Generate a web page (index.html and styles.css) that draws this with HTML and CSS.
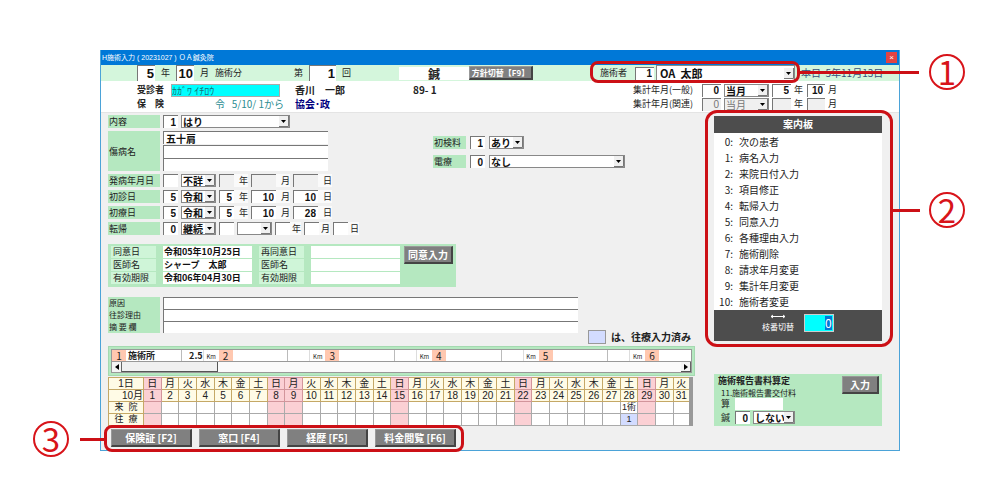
FILE: index.html
```html
<!DOCTYPE html>
<html lang="ja">
<head>
<meta charset="utf-8">
<title>施術入力</title>
<link rel="stylesheet" href="styles.css">
</head>
<body>
<div class="window">
  <header class="titlebar">
    <span>H施術入力 ( 20231027 ) ＯＡ鍼灸院</span>
    <button class="close" aria-label="閉じる">×</button>
  </header>

  <section class="top">
    <div class="band">
      <div class="period">
        <input class="field big" aria-label="施術年" value="5"><span>年</span>
        <input class="field big" aria-label="施術月" value="10"><span>月</span>
        <span>施術分</span>
      </div>
      <label class="times">第 <input class="field big" value="1"> 回</label>
      <strong class="kind">鍼</strong>
      <button class="btn switch">方針切替【F9】</button>
      <div class="practitioner">
        <label for="prac">施術者</label>
        <input class="field" id="prac" value="1">
        <select class="pick large" aria-label="施術者名"><option>OA&nbsp; 太郎</option></select>
        <div class="callout callout-1"><i></i><b>1</b></div>
      </div>
      <span class="today">本日&nbsp; 5年11月13日</span>
    </div>
    <div class="patient">
      <div class="info">
        <label for="kana">受診者</label><input class="kana" id="kana" value="ｶｶﾞﾜ ｲﾁﾛｳ"><strong>香川　一郎</strong><b>89- 1</b>
        <strong>保　険</strong><span class="since">令&nbsp;&nbsp; 5/10/ 1から</span><strong class="navy">協会･政</strong>
      </div>
      <div class="totals">
        <label for="t1">集計年月(一般)</label><input class="field" id="t1" value="0">
        <select class="pick" aria-label="一般の月"><option>当月</option></select>
        <input class="field" aria-label="一般の年" value="5"><span>年</span>
        <input class="field" aria-label="一般の集計月" value="10"><span>月</span>
        <label for="t2">集計年月(関連)</label><input class="field off" id="t2" value="0">
        <select class="pick off" aria-label="関連の月"><option>当月</option></select>
        <input class="field off" aria-label="関連の年"><span>年</span>
        <input class="field off" aria-label="関連の集計月"><span>月</span>
      </div>
    </div>
  </section>

  <main class="body">
    <div class="left">
      <div class="forms">
        <div class="form">
          <div class="row"><label class="tag" for="naiyo">内容</label><input class="field w15" id="naiyo" value="1"><select class="pick w108" aria-label="内容の種類"><option>はり</option></select></div>
          <div class="row disease"><label class="tag" for="dis">傷病名</label><div class="lines"><input class="field text" id="dis" value="五十肩"><input class="field" aria-label="傷病名2"><input class="field" aria-label="傷病名3"></div></div>
          <div class="row"><label class="tag" for="onset">発病年月日</label><input class="field w15" id="onset"><select class="pick w35" aria-label="発病元号"><option>不詳</option></select><span class="date"><input class="field off" aria-label="発病年">年</span><span class="date wide"><input class="field off" aria-label="発病月">月</span><span class="date wide"><input class="field off" aria-label="発病日">日</span></div>
          <div class="row"><label class="tag" for="first">初診日</label><input class="field w15" id="first" value="5"><select class="pick w35" aria-label="初診元号"><option>令和</option></select><span class="date"><input class="field" aria-label="初診年" value="5">年</span><span class="date wide"><input class="field" aria-label="初診月" value="10">月</span><span class="date wide"><input class="field" aria-label="初診日" value="10">日</span></div>
          <div class="row"><label class="tag" for="treat">初療日</label><input class="field w15" id="treat" value="5"><select class="pick w35" aria-label="初療元号"><option>令和</option></select><span class="date"><input class="field" aria-label="初療年" value="5">年</span><span class="date wide"><input class="field" aria-label="初療月" value="10">月</span><span class="date wide"><input class="field" aria-label="初療日" value="28">日</span></div>
          <div class="row"><label class="tag" for="result">転帰</label><input class="field w15" id="result" value="0"><select class="pick w35" aria-label="転帰区分"><option>継続</option></select><input class="field w15" aria-label="転帰元号番号"><select class="pick w35" aria-label="転帰元号"><option></option></select><span class="date short"><input class="field" aria-label="転帰年">年</span><span class="date short"><input class="field" aria-label="転帰月">月</span><span class="date short"><input class="field" aria-label="転帰日">日</span></div>
        </div>
        <div class="fees">
          <div class="row"><label class="tag" for="exam">初検料</label><input class="field w15" id="exam" value="1"><select class="pick w35" aria-label="初検料の有無"><option>あり</option></select></div>
          <div class="row"><label class="tag" for="elec">電療</label><input class="field w15" id="elec" value="0"><select class="pick w136" aria-label="電療の種類"><option>なし</option></select></div>
        </div>
      </div>

      <section class="consent">
        <div class="consent-grid">
          <span>同意日</span><b>令和05年10月25日</b><span>再同意日</span><b></b>
          <span>医師名</span><b>シャープ　太郎</b><span>医師名</span><b></b>
          <span>有効期限</span><b>令和06年04月30日</b><span>有効期限</span><b></b>
        </div>
        <button class="btn">同意入力</button>
      </section>

      <section class="notes">
        <div class="reasons">
          <label for="n1">原因</label><input class="field" id="n1">
          <label for="n2">往診理由</label><input class="field" id="n2">
          <label for="n3">摘 要 欄</label><input class="field" id="n3">
        </div>
        <div class="legend"><i></i>は、往療入力済み</div>
      </section>

      <section class="places">
        <div class="place-row">
          <div class="place"><em>1</em><b>施術所</b><b class="km">2.5</b><small>Km</small></div>
          <div class="place"><em>2</em><b></b><b class="km"></b><small>Km</small></div>
          <div class="place"><em>3</em><b></b><b class="km"></b><small>Km</small></div>
          <div class="place"><em>4</em><b></b><b class="km"></b><small>Km</small></div>
          <div class="place"><em>5</em><b></b><b class="km"></b><small>Km</small></div>
          <div class="place last"><em>6</em></div>
        </div>
        <div class="scroll">
          <button aria-label="左へ"><svg width="4" height="6" viewBox="0 0 4 6"><path d="M4 0V6L0 3Z"/></svg></button><i></i>
          <button class="next" aria-label="右へ"><svg width="4" height="6" viewBox="0 0 4 6"><path d="M0 0V6L4 3Z"/></svg></button>
        </div>
      </section>

      <table class="calendar">
        <colgroup><col class="head"><col class="h"><col span="6"><col class="h" span="2"><col span="5"><col class="h"><col span="6"><col class="h"><col span="6"><col class="h"><col span="2"></colgroup>
        <tr class="days"><th>1日</th><th class="h">日<th>月<th>火<th>水<th>木<th>金<th>土<th class="h">日<th class="h">月<th>火<th>水<th>木<th>金<th>土<th class="h">日<th>月<th>火<th>水<th>木<th>金<th>土<th class="h">日<th>月<th>火<th>水<th>木<th>金<th>土<th class="h">日<th>月<th>火</tr>
        <tr class="days"><th class="end">10月</th><th class="h">1<th>2<th>3<th>4<th>5<th>6<th>7<th class="h">8<th class="h">9<th>10<th>11<th>12<th>13<th>14<th class="h">15<th>16<th>17<th>18<th>19<th>20<th>21<th class="h">22<th>23<th>24<th>25<th>26<th>27<th>28<th class="h">29<th>30<th>31</tr>
        <tr><th>来&nbsp; 院</th><td><td><td><td><td><td><td><td><td><td><td><td><td><td><td><td><td><td><td><td><td><td><td><td><td><td><td><td>1術<td><td><td></tr>
        <tr><th>往&nbsp; 療</th><td><td><td><td><td><td><td><td><td><td><td><td><td><td><td><td><td><td><td><td><td><td><td><td><td><td><td><td class="done">1<td><td><td></tr>
      </table>

      <nav class="actions">
        <button class="btn">保険証 [F2]</button>
        <button class="btn">窓口 [F4]</button>
        <button class="btn">経歴 [F5]</button>
        <button class="btn">料金閲覧 [F6]</button>
        <div class="callout callout-3"><i></i><b>3</b></div>
      </nav>
    </div>

    <aside class="right">
      <section class="guide">
        <h2>案内板</h2>
        <ul>
          <li><span>0:</span>次の患者</li>
          <li><span>1:</span>病名入力</li>
          <li><span>2:</span>来院日付入力</li>
          <li><span>3:</span>項目修正</li>
          <li><span>4:</span>転帰入力</li>
          <li><span>5:</span>同意入力</li>
          <li><span>6:</span>各種理由入力</li>
          <li><span>7:</span>施術削除</li>
          <li><span>8:</span>請求年月変更</li>
          <li><span>9:</span>集計年月変更</li>
          <li><span>10:</span>施術者変更</li>
        </ul>
        <div class="branch">
          <label for="branch"><svg width="16" height="5" viewBox="0 0 16 5"><path d="M1 2.5H15M3 1L1 2.5L3 4M13 1L15 2.5L13 4" fill="none" stroke="#fff"/></svg>枝番切替</label>
          <span class="entry"><input id="branch" value="0"></span>
        </div>
        <div class="callout callout-2"><i></i><b>2</b></div>
      </section>

      <section class="report">
        <div>
          <strong>施術報告書料算定</strong>
          <p>11.施術報告書交付料</p>
          <div class="row"><label for="calc">算</label><input class="plain" id="calc"></div>
          <div class="row"><label for="hari">鍼</label><input class="field w15" id="hari" value="0"><select class="pick w42" aria-label="鍼の算定"><option>しない</option></select></div>
        </div>
        <button class="btn">入力</button>
      </section>
    </aside>
  </main>
</div>
</body>
</html>
```
FILE: styles.css
```css
* { box-sizing: border-box; }
body {
  margin: 0;
  padding: 50px 100px;
  background: #fff;
  color: #222;
  font: 9px/12px "Noto Sans CJK JP", sans-serif;
}
button, input, select { font: inherit; color: inherit; margin: 0; padding: 0; border-radius: 0; min-width: 0; }
h2, p, ul { margin: 0; padding: 0; list-style: none; }

.window { border: 1px solid #4ba3d8; border-top: 0; background: #f0f0f0; }
.titlebar {
  display: flex; justify-content: space-between; align-items: center;
  height: 15px; padding: 0 2px 0 1px;
  background: #0078d7; color: #fff;
  font-family: "Liberation Sans", "Noto Sans CJK JP", sans-serif; font-size: 7px;
}
.close { width: 11px; height: 11px; border: 0; background: #e04343; color: #fff; font-size: 8px; line-height: 10px; }

.field {
  height: 13px; padding: 0 2px;
  border: 0; border-top: 1px solid #777; border-left: 1px solid #777;
  background: #fff; color: #111;
  font-family: "Liberation Sans", "Noto Sans CJK JP", sans-serif;
  font-weight: bold; font-size: 10px; line-height: 12px; text-align: right;
}
.field.big { height: 16px; padding: 0 1px; font-size: 13px; line-height: 14px; }
.field.text { text-align: left; }
.field.off { background: #f0f0f0; color: #777; font-weight: normal; }
.pick {
  appearance: none;
  height: 13px; padding: 0 10px 0 1px;
  border: 1px solid #888;
  background: #fff url("data:image/svg+xml,%3Csvg xmlns='http://www.w3.org/2000/svg' width='10' height='11'%3E%3Cpath d='M0 0H10V11H0Z' fill='%23f0f0f0'/%3E%3Cpath d='M9.5 0V10.500H0' fill='none' stroke='%23777'/%3E%3Cpath d='M2 4H7L4.500 7Z' fill='%23000'/%3E%3C/svg%3E") right center no-repeat;
  color: #111; font-weight: bold; font-size: 10px; line-height: 11px;
}
.pick.large { height: 16px; padding-left: 3px; font-size: 11px; line-height: 14px; }
.pick.off { background-color: #f0f0f0; color: #777; font-weight: normal; }
.btn {
  height: 18px; border: 1px solid #999; border-right: 2px solid #444; border-bottom: 2px solid #444;
  background: #808080; color: #fff; font-size: 10px; font-weight: bold; line-height: 14px; white-space: nowrap;
}
.w15 { width: 15px; }
.w35 { width: 35px; }
.w42 { width: 42px; }
.w108 { width: 109px; }
.w136 { width: 136px; }

.top { height: 48px; background: #fff; border-bottom: 1px solid #e4e4e4; }
.band { display: flex; align-items: center; height: 16px; padding: 0 17px 0 36px; background: #d4f6dc; }
.period { display: flex; align-items: center; gap: 6px; width: 157px; }
.period .field { width: 18px; }
.times { display: flex; align-items: center; gap: 6px; width: 105px; }
.times .field { width: 27px; }
.kind { width: 70px; height: 13px; background: #fff; font-size: 12px; line-height: 13px; text-align: center; }
.switch { width: 64px; height: 14px; font-size: 8px; line-height: 10px; }
.practitioner { position: relative; display: flex; align-items: center; gap: 2px; margin-left: auto; }
.practitioner label { margin-right: 6px; }
.practitioner .field { width: 19px; }
.practitioner .pick { width: 139px; }
.today { margin-left: 6px; width: 81px; color: #35507a; font-size: 10px; white-space: nowrap; }
.patient { display: flex; justify-content: space-between; padding: 2px 61px 0 36px; }
.info { display: grid; grid-template-columns: 34px 124px 118px 50px; grid-auto-rows: 14px; align-items: center; font-size: 10px; white-space: nowrap; }
.info label { font-size: 9px; font-weight: bold; }
.info strong:nth-of-type(2) { font-size: 9px; }
.kana { width: 109px; height: 13px; border: 1px solid #aaa; background: #0ff; color: #176f79; font-size: 10px; }
.since { padding-left: 44px; color: #2b8c91; }
.navy { color: #000080; }
.totals { display: grid; grid-template-columns: 66px 19px 45px 19px 10px 18px 10px; column-gap: 3px; grid-auto-rows: 14px; align-items: center; white-space: nowrap; }

.body { display: flex; gap: 19px; padding: 2px 17px 3px 7px; }
.left { flex: 1; min-width: 0; }
.right { width: 168px; }
.row { display: flex; align-items: center; gap: 3px; }
.row > * { flex-shrink: 0; }
.tag { align-self: stretch; width: 52px; padding-left: 1px; background: #b5e8c0; line-height: 13px; white-space: nowrap; }
.forms { display: flex; gap: 72px; }
.form { display: flex; flex-direction: column; gap: 3px; width: 253px; }
.disease { height: 40px; }
.disease .tag { display: flex; align-items: center; }
.lines { display: flex; flex-direction: column; justify-content: space-between; height: 40px; width: 165px; }
.date { display: flex; align-items: center; gap: 5px; width: 29px; background: #fafafa; }
.date .field { width: 15px; }
.date.wide { width: 39px; }
.date.wide .field { width: 25px; }
.date.short { width: 26px; gap: 2px; }
.fees { display: flex; flex-direction: column; gap: 6px; padding-top: 21px; }
.fees .row { gap: 4px; }
.fees .tag { width: 33px; }

.consent { display: flex; justify-content: space-between; align-items: flex-start; width: 348px; margin-top: 9px; padding: 2px 3px; background: #b5e8c0; }
.consent-grid { display: grid; grid-template-columns: 45px 89px 45px 89px; column-gap: 7px; row-gap: 1px; grid-auto-rows: 12px; padding-bottom: 1px; white-space: nowrap; }
.consent span { padding-left: 2px; background: #cff5d8; }
.consent b { background: #fff; color: #111; padding-left: 1px; }
.consent .btn { width: 49px; }

.notes { display: flex; justify-content: space-between; margin-top: 10px; padding-right: 4px; }
.reasons { display: grid; grid-template-columns: 55px 415px; grid-auto-rows: 12px; }
.reasons label { margin-right: 3px; padding-left: 1px; background: #b5e8c0; font-size: 8px; }
.reasons .field { height: 12px; }
.legend { display: flex; align-items: center; gap: 5px; height: 14px; margin-top: 33px; font-size: 10px; font-weight: bold; white-space: nowrap; }
.legend i { width: 18px; height: 14px; border: 1px solid #999; background: #d3dcff; }

.places { margin-top: 2px; padding: 2px; background: #b5e8c0; border: 1px solid #a4d9b0; }
.place-row { display: flex; height: 13px; background: #fff; border: 1px solid #999; overflow: hidden; }
.place { display: flex; flex: 107; min-width: 0; }
.place.last { flex: 46; }
.place em { width: 14px; background: #ffc8b0; font-style: normal; font-size: 10px; text-align: center; }
.place b { flex: 1; padding-left: 2px; }
.place .km { flex: 0 0 22px; border-left: 1px solid #bbb; text-align: right; }
.place small { width: 16px; font-size: 6px; line-height: 14px; text-align: center; border-left: 1px solid #ddd; }
.scroll { display: flex; height: 11px; background: #fafafa; border: 1px solid #999; border-top: 0; }
.scroll button { display: flex; align-items: center; justify-content: center; width: 10px; border: 0; border-right: 1px solid #666; background: #f4f4f4; }
.scroll i { width: 96px; background: #f0f0f0; border-right: 1px solid #555; border-bottom: 1px solid #555; }
.scroll .next { margin-left: auto; border-bottom: 1px solid #555; }

.calendar { width: 585px; max-width: 100%; margin-top: 1px; table-layout: fixed; border-collapse: collapse; border-right: 4px solid #999; background: #fff; }
.calendar .head { width: 35px; }
.calendar .h { background: #fbd0d4; }
.calendar th, .calendar td {
  height: 12px; padding: 0; border: 1px solid #aaa;
  font-family: "Liberation Sans", "Noto Sans CJK JP", sans-serif;
  font-size: 10px; font-weight: normal; line-height: 11px; text-align: center; white-space: nowrap;
}
.calendar th { border-color: #c5a866; background: #fffbe6; }
.calendar th.h { border-color: #d2959b; background: #fbd0d4; }
.calendar .end { text-align: right; }
.calendar tr:nth-child(n+3) th { font-size: 9px; }
.calendar td { font-size: 9px; }
.calendar .done { background: #d3dcff; }

.actions { position: relative; display: flex; gap: 7px; width: 348px; margin-top: 3px; padding-left: 3px; }
.actions .btn { flex: 1; }

.guide { position: relative; margin-top: 1px; background: #fff; }
.guide h2 { height: 17px; background: #4d4d4d; color: #fff; font-size: 10px; line-height: 15px; text-align: center; }
.guide ul { padding: 1px 0 0 4px; font-size: 10px; line-height: 16px; }
.guide li { display: flex; gap: 6px; }
.guide li span { width: 15px; text-align: right; }
.branch { display: flex; justify-content: center; gap: 10px; height: 31px; padding: 4px 0 0; background: #4d4d4d; color: #fff; }
.branch label { display: flex; flex-direction: column; align-items: center; font-size: 8px; }
.branch svg { margin-bottom: 2px; }
.entry { display: flex; justify-content: flex-end; width: 30px; height: 18px; padding: 1px; border: 1px solid #ccc; background: #0ff; }
.entry input { width: 7px; height: 14px; border: 0; background: #0078d7; color: #fff; font-size: 12px; line-height: 14px; }

.report { display: flex; justify-content: space-between; align-items: flex-start; margin-top: 33px; padding: 1px 3px 1px 4px; background: #b5e8c0; }
.report strong { display: block; white-space: nowrap; }
.report p { padding-left: 3px; font-size: 8px; line-height: 11px; white-space: nowrap; }
.report .row { padding-left: 3px; margin-bottom: 1px; }
.report .row label { width: 11px; }
.plain { width: 48px; height: 12px; border: 0; background: #fff; }
.report .btn { width: 37px; margin-top: 1px; }

.callout { position: absolute; border: 3px solid #cc1016; border-radius: 8px; pointer-events: none; z-index: 1; }
.callout i { position: absolute; top: 50%; height: 3px; margin-top: -1px; background: #cc1016; }
.callout b {
  position: absolute; top: 50%; width: 36px; height: 36px; margin-top: -18px;
  border: 2px solid #d8141a; border-radius: 50%;
  color: #d8141a; font-size: 33px; font-weight: normal; line-height: 30px; text-align: center;
}
.callout-1 { inset: -4px -5px -2px -10px; }
.callout-1 i { left: 100%; width: 122px; }
.callout-1 b { left: calc(100% + 132px); }
.callout-2 { inset: -6px -11px -6px -9px; border-radius: 12px; }
.callout-2 i { left: 100%; top: 42%; width: 30px; }
.callout-2 b { left: calc(100% + 39px); top: 42%; }
.callout-3 { inset: -4px -8px -5px -4px; }
.callout-3 i { right: 100%; width: 27px; }
.callout-3 b { right: calc(100% + 38px); }
```
